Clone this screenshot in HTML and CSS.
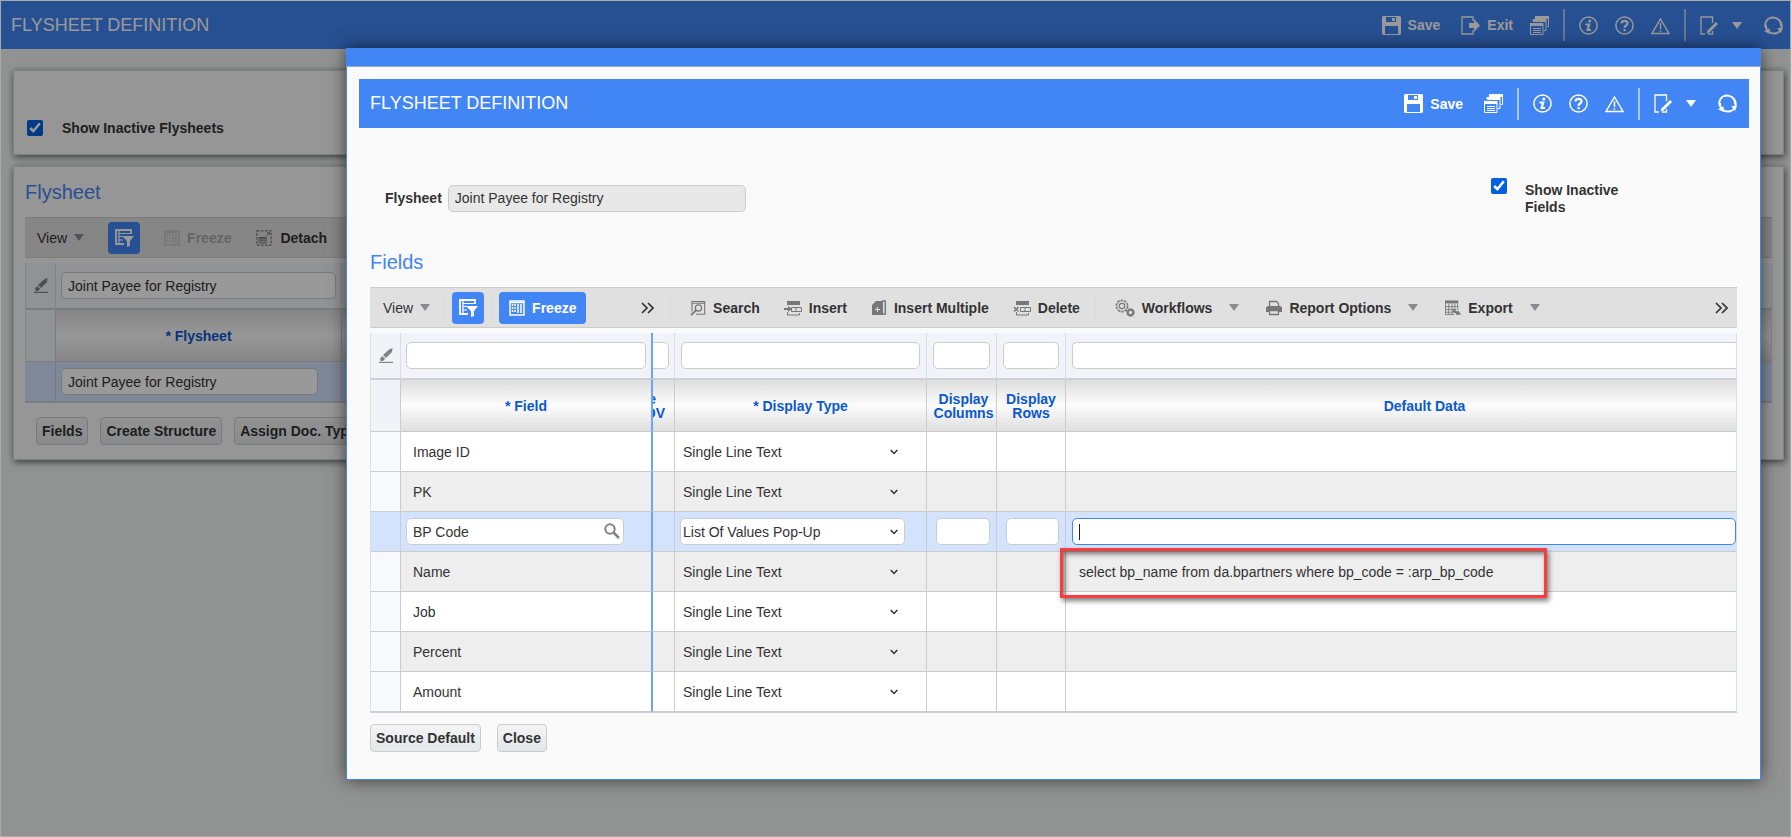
FILE: index.html
```html
<!DOCTYPE html>
<html lang="en">
<head>
  <meta charset="UTF-8" />
  <meta name="viewport" content="width=device-width, initial-scale=1.0" />
  <title>Flysheet Definition</title>
  <link rel="stylesheet" href="styles.css">
</head>
<body>
  <!-- icon set -->
  <svg class="defs" aria-hidden="true">
    <symbol id="i-save" viewBox="0 0 19 19">
      <path fill="currentColor" fill-rule="evenodd" d="M1 0h17l1 1v17l-1 1H1l-1-1V1zM4 1v5h10V1zM3 10v8h13v-8z"/>
      <path fill="currentColor" d="M10 2h3v3h-3z"/>
    </symbol>
    <symbol id="i-exit" viewBox="0 0 19 19">
      <path fill="none" stroke="currentColor" stroke-width="1.300" d="M12 5V1H1v17h11v-4"/>
      <path fill="currentColor" d="M8 7h5V3l6 6.500-6 6.500v-4H8z"/>
    </symbol>
    <symbol id="i-windows" viewBox="0 0 19 19">
      <path fill="none" stroke="currentColor" d="M5.500 2.500v-2h13v10H17M3 5V3.500h13v11h-2M.5 7.500h12.500v11H.5z"/>
      <path fill="currentColor" d="M5 0h14v3H5zM3 3h13v3H3zM0 7h13v3H0zM3 12h8v1H3zM3 14h8v1H3zM3 16h8v1H3z"/>
    </symbol>
    <symbol id="i-info" viewBox="0 0 19 19">
      <circle cx="9.500" cy="9.500" r="8.600" fill="none" stroke="currentColor" stroke-width="1.500"/>
      <circle cx="10.800" cy="4.900" r="1.500" fill="currentColor"/>
      <path fill="none" stroke="currentColor" stroke-width="2.200" d="M6.500 8.500h3.700L8.600 14h3.400"/>
    </symbol>
    <symbol id="i-help" viewBox="0 0 19 19">
      <circle cx="9.500" cy="9.500" r="8.600" fill="none" stroke="currentColor" stroke-width="1.500"/>
      <path fill="none" stroke="currentColor" stroke-width="2.200" d="M6.500 7.500c0-3.600 6-3.600 6 0 0 2-3 2-3 4.200"/>
      <path fill="currentColor" d="M8.500 13h2.200v2.200H8.500z"/>
    </symbol>
    <symbol id="i-warn" viewBox="0 0 19 19">
      <path fill="none" stroke="currentColor" stroke-width="1.400" d="M9.500 3L18 17.500H1z"/>
      <path fill="none" stroke="currentColor" stroke-width="1.500" d="M9.500 7v6M9.500 14.200v1.600"/>
    </symbol>
    <symbol id="i-edit" viewBox="0 0 19 19">
      <path fill="none" stroke="currentColor" stroke-width="1.300" d="M12.500 7V1H1v17h4M8 18h4.500v-3"/>
      <path fill="currentColor" d="M16 6l2 2-8.500 8.500-3 1 1-3z"/>
    </symbol>
    <symbol id="i-refresh" viewBox="0 0 20 20">
      <path fill="none" stroke="currentColor" stroke-width="2" d="M4 15.500A8 8 0 0 1 12 2M16 4.500A8 8 0 0 1 8 18M7 2.300a8 8 0 0 1 10.800 8.700M13 17.700A8 8 0 0 1 2.200 9"/>
      <path fill="currentColor" d="M0 16l6-3v6zM20 12l-6 1 4 5z"/>
    </symbol>
    <symbol id="i-caret" viewBox="0 0 10 7"><path fill="currentColor" d="M0 0h10L5 7z"/></symbol>
    <symbol id="i-qbe" viewBox="0 0 20 20">
      <path fill="none" stroke="currentColor" stroke-width="1.800" d="M17 6V2H2v14h8"/>
      <path fill="none" stroke="currentColor" stroke-width="1.200" d="M4 5.500h12M4 8.500h5M4 12h5M5 3v12"/>
      <path fill="currentColor" d="M8 8h12l-4 5v5l-3 1v-6z"/>
    </symbol>
    <symbol id="i-freeze" viewBox="0 0 16 16">
      <path fill="none" stroke="currentColor" stroke-width="1.500" d="M1 1h14v14H1z"/>
      <path fill="none" stroke="currentColor" stroke-width="1.500" stroke-dasharray="2 1" d="M3.500 4v9M6 4v9"/>
      <path fill="none" stroke="currentColor" stroke-width="1.500" d="M9 4v9M12 4v9M1 2.500h14"/>
    </symbol>
    <symbol id="i-detach" viewBox="0 0 18 18">
      <path fill="none" stroke="currentColor" stroke-width="1.300" stroke-dasharray="3 1.500" d="M1 1h16v16H1z"/>
      <path fill="none" stroke="currentColor" d="M3.500 8.500h8v6h-8zM6 8v6M9 8v6M3 11.500h8M11 7l3-3"/>
      <path fill="currentColor" d="M12 2.500h3.500V6zM3 8h9v1.500H3z"/>
    </symbol>
    <symbol id="i-pencil" viewBox="0 0 14 15">
      <path fill="currentColor" d="M13.500 0l-.5 4-6 6-3-3 6-5.500zM3.200 8l3 2.800L4 13H1.500L1 10.500z"/>
      <path fill="currentColor" d="M0 13.800h14V15H0z"/>
    </symbol>
    <symbol id="i-find" viewBox="0 0 16 17">
      <path fill="none" stroke="currentColor" stroke-width="1.200" d="M1.600 12V1.600h13.500v13.500H6M1.600 3.500h13.500"/>
      <circle cx="8.500" cy="8.500" r="3.300" fill="none" stroke="currentColor" stroke-width="1.300"/>
      <path stroke="currentColor" stroke-width="2" d="M6 11l-5.500 5"/>
      <path stroke="currentColor" d="M10 2h1M12 2h2"/>
    </symbol>
    <symbol id="i-insert" viewBox="0 0 18 16">
      <path fill="currentColor" d="M3 1h13v4H3zM0 8h4V6l4 3-4 3v-2H0z"/>
      <path fill="none" stroke="currentColor" d="M7.500 7.500h10v4h-10zM3.500 12v3h12v-2M12 8v3"/>
    </symbol>
    <symbol id="i-multi" viewBox="0 0 16 16">
      <path fill="currentColor" fill-rule="evenodd" d="M5 1h7v14H1V5zM6 7v2H4v1h2v2h1v-2h2V9H7V7z"/>
      <path fill="none" stroke="currentColor" stroke-width="1.500" d="M11 1h3.300v13H12"/>
    </symbol>
    <symbol id="i-delete" viewBox="0 0 18 16">
      <path fill="currentColor" d="M3 1h13v4H3z"/>
      <path fill="none" stroke="currentColor" stroke-width="1.500" d="M1 7l4.500 4.500M5.500 7L1 11.500"/>
      <path fill="none" stroke="currentColor" d="M7.500 7.500h10v4h-10zM3.500 12v3h12v-2M12 8v3"/>
    </symbol>
    <symbol id="i-gears" viewBox="0 0 20 18">
      <circle cx="7" cy="7" r="5.800" fill="none" stroke="currentColor" stroke-width="1.300" stroke-dasharray="2.600 1"/>
      <circle cx="7" cy="7" r="5" fill="none" stroke="currentColor" stroke-width=".5"/>
      <circle cx="7" cy="7" r="2.700" fill="none" stroke="currentColor" stroke-width="1.200"/>
      <circle cx="15.500" cy="13.500" r="2.700" fill="none" stroke="currentColor" stroke-width="2"/>
      <circle cx="15.500" cy="13.500" r="3.900" fill="none" stroke="currentColor" stroke-dasharray="1.700 1.300"/>
    </symbol>
    <symbol id="i-print" viewBox="0 0 16 16">
      <path fill="none" stroke="currentColor" stroke-width="1.300" d="M3.500 6V1.500h7l2 2V6M3.500 10.500h9v4h-9z"/>
      <path fill="currentColor" d="M1.500 6h13L16 7.500V12h-3v-2H3v2H0V7.500z"/>
    </symbol>
    <symbol id="i-export" viewBox="0 0 17 16">
      <path fill="currentColor" d="M0 0h14v3H0z"/>
      <path fill="none" stroke="currentColor" stroke-width=".9" d="M.5 1v14H10M4 3v12M7.500 3v12M10.500 3v8M13.500 3v7M0 6.500h14M0 9.500h12M0 12.500h9"/>
      <path fill="currentColor" d="M9 9l4 3 1-1.500 3 4.500-5 .5 0-1.500-4-2z"/>
    </symbol>
    <symbol id="i-more" viewBox="0 0 13 12">
      <path fill="none" stroke="currentColor" stroke-width="1.700" d="M1 1l5 5-5 5M7 1l5 5-5 5"/>
    </symbol>
    <symbol id="i-chevron" viewBox="0 0 8 6">
      <path fill="none" stroke="currentColor" stroke-width="1.500" d="M.7 1L4 4.500 7.300 1"/>
    </symbol>
    <symbol id="i-lens" viewBox="0 0 16 16">
      <circle cx="6" cy="6" r="4.700" fill="none" stroke="currentColor" stroke-width="2"/>
      <path stroke="currentColor" stroke-width="2.600" d="M9.500 9.500l5.500 5.500"/>
    </symbol>
  </svg>

  <div class="page">
    <header class="titlebar">
      <h1>FLYSHEET DEFINITION</h1>
      <div class="actions">
        <button class="action save"><svg class="ic19"><use href="#i-save"/></svg>Save</button>
        <button class="action"><svg class="ic19"><use href="#i-exit"/></svg>Exit</button>
        <button class="action" aria-label="Windows"><svg class="ic19"><use href="#i-windows"/></svg></button>
        <span class="divider"></span>
        <button class="action" aria-label="Info"><svg class="ic19"><use href="#i-info"/></svg></button>
        <button class="action" aria-label="Help"><svg class="ic19"><use href="#i-help"/></svg></button>
        <button class="action" aria-label="Warnings"><svg class="ic19"><use href="#i-warn"/></svg></button>
        <span class="divider"></span>
        <button class="action edit" aria-label="Edit"><svg class="ic19"><use href="#i-edit"/></svg><svg class="caret"><use href="#i-caret"/></svg></button>
        <button class="action" aria-label="Refresh"><svg class="ic19"><use href="#i-refresh"/></svg></button>
      </div>
    </header>

    <main>
      <section class="panel search-panel">
        <label class="check"><input type="checkbox" checked>Show Inactive Flysheets</label>
      </section>

      <section class="panel list-panel">
        <h2>Flysheet</h2>
        <div class="toolbar">
          <button class="tool plain">View<svg class="caret"><use href="#i-caret"/></svg></button>
          <button class="tool blue square" aria-label="Query by example"><svg class="ic20"><use href="#i-qbe"/></svg></button>
          <button class="tool off" disabled><svg class="ic16"><use href="#i-freeze"/></svg>Freeze</button>
          <button class="tool"><svg class="ic18"><use href="#i-detach"/></svg>Detach</button>
        </div>
        <table class="grid">
          <colgroup><col class="c-gutter"><col class="c-name"><col></colgroup>
          <thead>
            <tr class="filter">
              <td><svg class="pencil"><use href="#i-pencil"/></svg></td>
              <td><input type="text" aria-label="Filter flysheet" value="Joint Payee for Registry"></td>
              <td></td>
            </tr>
            <tr class="head"><th></th><th>* Flysheet</th><th></th></tr>
          </thead>
          <tbody>
            <tr class="current"><td></td><td><input class="name-box" type="text" aria-label="Flysheet name" value="Joint Payee for Registry"></td><td></td></tr>
          </tbody>
        </table>
        <div class="buttons">
          <button class="btn">Fields</button>
          <button class="btn">Create Structure</button>
          <button class="btn">Assign Doc. Type</button>
        </div>
      </section>
    </main>

    <div class="shade"></div>

    <div class="dialog" role="dialog" aria-label="Flysheet Definition">
      <div class="dialog-top"></div>
      <div class="dialog-body">
        <header class="titlebar">
          <h1>FLYSHEET DEFINITION</h1>
          <div class="actions">
            <button class="action save"><svg class="ic19"><use href="#i-save"/></svg>Save</button>
            <button class="action" aria-label="Windows"><svg class="ic19"><use href="#i-windows"/></svg></button>
            <span class="divider"></span>
            <button class="action" aria-label="Info"><svg class="ic19"><use href="#i-info"/></svg></button>
            <button class="action" aria-label="Help"><svg class="ic19"><use href="#i-help"/></svg></button>
            <button class="action" aria-label="Warnings"><svg class="ic19"><use href="#i-warn"/></svg></button>
            <span class="divider"></span>
            <button class="action edit" aria-label="Edit"><svg class="ic19"><use href="#i-edit"/></svg><svg class="caret"><use href="#i-caret"/></svg></button>
            <button class="action" aria-label="Refresh"><svg class="ic19"><use href="#i-refresh"/></svg></button>
          </div>
        </header>

        <div class="dialog-content">
          <div class="form">
            <div class="field">
              <label for="flysheet">Flysheet</label>
              <input id="flysheet" type="text" value="Joint Payee for Registry" readonly>
            </div>
            <label class="check"><input type="checkbox" checked><span>Show Inactive Fields</span></label>
          </div>

          <h2>Fields</h2>
          <div class="toolbar">
            <div class="seg"><button class="tool plain">View<svg class="caret"><use href="#i-caret"/></svg></button></div>
            <div class="seg"><button class="tool blue square" aria-label="Query by example"><svg class="ic20"><use href="#i-qbe"/></svg></button></div>
            <div class="seg seg-freeze">
              <button class="tool blue"><svg class="ic16"><use href="#i-freeze"/></svg>Freeze</button>
              <button class="tool more" aria-label="More"><svg><use href="#i-more"/></svg></button>
            </div>
            <div class="seg seg-edit">
              <button class="tool"><svg class="ic16"><use href="#i-find"/></svg>Search</button>
              <button class="tool"><svg class="ic18"><use href="#i-insert"/></svg>Insert</button>
              <button class="tool"><svg class="ic16"><use href="#i-multi"/></svg>Insert Multiple</button>
              <button class="tool"><svg class="ic18"><use href="#i-delete"/></svg>Delete</button>
            </div>
            <div class="seg seg-menus">
              <button class="tool drop"><svg class="ic20"><use href="#i-gears"/></svg>Workflows<svg class="caret"><use href="#i-caret"/></svg></button>
              <button class="tool drop"><svg class="ic16"><use href="#i-print"/></svg>Report Options<svg class="caret"><use href="#i-caret"/></svg></button>
              <button class="tool drop"><svg class="ic16"><use href="#i-export"/></svg>Export<svg class="caret"><use href="#i-caret"/></svg></button>
            </div>
            <button class="tool more last" aria-label="More"><svg><use href="#i-more"/></svg></button>
          </div>

          <table class="grid fields">
            <colgroup>
              <col class="c-gutter"><col class="c-field"><col class="c-lov"><col class="c-type"><col class="c-cols"><col class="c-rows"><col>
            </colgroup>
            <thead>
              <tr class="filter">
                <td><svg class="pencil"><use href="#i-pencil"/></svg></td>
                <td><input type="text" aria-label="Filter field"></td>
                <td class="lov"><input type="text" aria-label="Filter LOV"></td>
                <td><input type="text" aria-label="Filter display type"></td>
                <td><input type="text" aria-label="Filter display columns"></td>
                <td><input type="text" aria-label="Filter display rows"></td>
                <td class="cut"><input type="text" aria-label="Filter default data"></td>
              </tr>
              <tr class="head">
                <th></th>
                <th>* Field</th>
                <th class="lov"><span class="upper">e</span><span>OV</span></th>
                <th>* Display Type</th>
                <th class="snug">Display Columns</th>
                <th>Display Rows</th>
                <th class="wide">Default Data</th>
              </tr>
            </thead>
            <tbody>
              <tr>
                <td></td><td>Image ID</td><td></td>
                <td><div class="pick"><select aria-label="Display type"><option>Single Line Text</option></select><svg><use href="#i-chevron"/></svg></div></td>
                <td></td><td></td><td></td>
              </tr>
              <tr>
                <td></td><td>PK</td><td></td>
                <td><div class="pick"><select aria-label="Display type"><option>Single Line Text</option></select><svg><use href="#i-chevron"/></svg></div></td>
                <td></td><td></td><td></td>
              </tr>
              <tr class="current">
                <td></td>
                <td><div class="lookup"><input type="text" aria-label="Field" value="BP Code"><svg><use href="#i-lens"/></svg></div></td>
                <td></td>
                <td><div class="pick"><select aria-label="Display type"><option>List Of Values Pop-Up</option></select><svg><use href="#i-chevron"/></svg></div></td>
                <td class="num"><input type="text" aria-label="Display columns"></td>
                <td class="num"><input type="text" aria-label="Display rows"></td>
                <td class="edge"><div class="focus-box"><input type="text" aria-label="Default data"><span class="cursor"></span></div></td>
              </tr>
              <tr>
                <td></td><td>Name</td><td></td>
                <td><div class="pick"><select aria-label="Display type"><option>Single Line Text</option></select><svg><use href="#i-chevron"/></svg></div></td>
                <td></td><td></td>
                <td class="marked">select bp_name from da.bpartners where bp_code = :arp_bp_code<span class="mark"></span></td>
              </tr>
              <tr>
                <td></td><td>Job</td><td></td>
                <td><div class="pick"><select aria-label="Display type"><option>Single Line Text</option></select><svg><use href="#i-chevron"/></svg></div></td>
                <td></td><td></td><td></td>
              </tr>
              <tr>
                <td></td><td>Percent</td><td></td>
                <td><div class="pick"><select aria-label="Display type"><option>Single Line Text</option></select><svg><use href="#i-chevron"/></svg></div></td>
                <td></td><td></td><td></td>
              </tr>
              <tr>
                <td></td><td>Amount</td><td></td>
                <td><div class="pick"><select aria-label="Display type"><option>Single Line Text</option></select><svg><use href="#i-chevron"/></svg></div></td>
                <td></td><td></td><td></td>
              </tr>
            </tbody>
          </table>

          <div class="buttons">
            <button class="btn">Source Default</button>
            <button class="btn">Close</button>
          </div>
        </div>
      </div>
    </div>
  </div>
</body>
</html>
```
FILE: styles.css
```css
* {
  box-sizing: border-box;
}
body {
  margin: 0;
  font-family: "Liberation Sans", Arial, sans-serif;
  font-size: 14px;
  color: #333;
}
button, input, select {
  font: inherit;
  color: inherit;
}
button {
  background: none;
  border: none;
  padding: 0;
}
.defs {
  display: none;
}
svg {
  flex: none;
}
.page {
  position: relative;
  min-height: 100vh;
  background: #f2f5f4;
  border: 1px solid #a9a9a9;
  overflow: hidden;
}
.shade {
  position: absolute;
  inset: 0;
  background: rgba(0, 0, 0, 0.4);
}

/* icons */
.ic16 { width: 16px; height: 16px; }
.ic18 { width: 18px; height: 16px; }
.ic19 { width: 19px; height: 19px; }
.ic20 { width: 20px; height: 20px; }
.caret { width: 10px; height: 7px; }
.pencil {
  display: block;
  width: 14px;
  height: 15px;
  margin: 0 auto;
  color: #808488;
}

/* title bars */
.titlebar {
  display: flex;
  align-items: center;
  justify-content: space-between;
  height: 48px;
  padding: 0 7px 0 10px;
  background: #4285f4;
  color: #fff;
}
h1 {
  margin: 0;
  font-size: 18px;
  font-weight: normal;
}
.actions {
  display: flex;
  align-items: center;
  gap: 17px;
}
.action {
  display: flex;
  align-items: center;
  gap: 7px;
  font-weight: bold;
  color: #fff;
}
.action.save {
  margin-right: 4px;
}
.action.edit {
  gap: 13px;
  margin-right: 5px;
}
.divider {
  width: 2px;
  height: 32px;
  margin: 0 -3px;
  background: #a8c8f8;
}

/* page behind the dialog */
main {
  padding: 21px 6px 0 12px;
}
.panel {
  background: #fafafa;
  border: 1px solid #d8d8d8;
  box-shadow: 1px 2px 7px rgba(0, 0, 0, 0.6);
  margin-bottom: 11px;
}
.search-panel {
  padding: 49px 13px 17px;
}
.list-panel {
  padding: 13px 11px 14px;
}
.check {
  display: flex;
  gap: 19px;
  font-weight: bold;
  line-height: 17px;
}
.check input {
  flex: none;
  width: 16px;
  height: 16px;
  margin: 0;
  accent-color: #0060df;
}
h2 {
  margin: 0 0 13px;
  font-size: 20px;
  font-weight: normal;
  line-height: 24px;
  color: #4285f4;
}
.toolbar {
  display: flex;
  align-items: center;
  height: 41px;
  background: #e0e0e0;
  border-top: 1px solid #ccc;
  border-bottom: 1px solid #ccc;
}
.tool {
  display: flex;
  align-items: center;
  gap: 7px;
  font-weight: bold;
}
.tool svg {
  color: #777;
}
.tool .caret {
  color: #888c90;
}
.tool.plain {
  font-weight: normal;
}
.tool.off {
  color: #a8a8a8;
}
.tool.off svg {
  color: #c4c4c4;
}
.tool.blue {
  height: 32px;
  padding: 0 10px;
  background: #4285f4;
  border-radius: 4px;
  color: #fff;
}
.tool.blue svg {
  color: #fff;
}
.tool.square {
  width: 32px;
  padding: 0 6px;
}
.tool.drop .caret {
  margin-left: 10px;
}
.tool.more svg {
  width: 13px;
  height: 12px;
  color: #333;
}
.tool.last {
  margin-left: auto;
  padding-right: 9px;
}
.list-panel .toolbar {
  gap: 24px;
  padding-left: 12px;
}

/* grids */
.grid {
  width: 100%;
  margin-top: 5px;
  table-layout: fixed;
  border-collapse: separate;
  border-spacing: 0;
  border-left: 1px solid #d6dfe6;
  border-bottom: 1px solid #ccd2d6;
}
.c-gutter { width: 30px; }
.c-name { width: 286px; }
.c-field { width: 252px; }
.c-lov { width: 22px; }
.c-type { width: 252px; }
.c-cols { width: 70px; }
.c-rows { width: 69px; }
.grid td, .grid th {
  height: 40px;
  padding: 0 5px;
  border-right: 1px solid #ccc;
  border-bottom: 1px solid #ccc;
  text-align: left;
}
.grid .filter td {
  height: 47px;
  background: #f1f3f8;
  border-right-color: #d6dfe6;
  border-bottom: 2px solid #c8d0d6;
}
.grid .filter td:nth-child(n+4) {
  padding: 0 6px;
}
.grid .head th {
  height: 52px;
  background: linear-gradient(#dedede, #fcfcfc 50%, #dedede);
  color: #0b57d0;
  text-align: center;
  line-height: 14px;
}
.grid .head th:first-child {
  background: #f1f3f8;
}
.grid tbody td {
  background: #fff;
}
.grid tbody td:nth-child(2) {
  padding-left: 12px;
}
.grid tbody td:last-child {
  padding-left: 13px;
}
.grid tbody tr:nth-child(even) td {
  background: #eee;
}
.grid tbody tr td:first-child {
  background: #f7f9fd;
}
.grid tbody tr.current td {
  background: #d3e3fd;
  padding-left: 5px;
}
.grid td:last-child, .grid th:last-child {
  border-right-color: #d6dfe6;
}
.grid input {
  display: block;
  width: 100%;
  height: 27px;
  padding: 0 6px;
  background: #fff;
  border: 1px solid #ccc;
  border-radius: 5px;
}
.grid input.name-box {
  width: 257px;
}
.fields td:nth-child(2), .fields th:nth-child(2) {
  border-right: 2px solid #6fa3f7;
}
.fields .filter td:nth-child(2) {
  border-right-color: #6fa3f7;
}
.grid .filter td.lov {
  padding-left: 0;
}
.lov input {
  border-left: none;
  border-radius: 0 5px 5px 0;
}
/* the frozen column covers the left part of this header */
.grid th.lov {
  padding: 0 9px 0 0;
  overflow: hidden;
}
.lov span {
  display: flex;
  justify-content: flex-end;
  overflow: hidden;
}
.lov .upper {
  padding-right: 9px;
}
.grid th.snug {
  padding: 0 2px 0 6px;
}
/* this column runs on past the right edge */
.fields th.wide {
  padding-left: 52px;
}
.grid .filter td.cut {
  padding-right: 0;
}
.cut input {
  border-right: none;
  border-radius: 5px 0 0 5px;
}
.pick, .lookup, .focus-box {
  position: relative;
}
.pick {
  width: 225px;
}
.pick select {
  appearance: none;
  display: block;
  width: 100%;
  height: 27px;
  padding: 0 24px 0 2px;
  background: transparent;
  border: 1px solid transparent;
  border-radius: 5px;
}
.current .pick select {
  background: #fff;
  border-color: #ccc;
}
.pick svg {
  position: absolute;
  right: 7px;
  top: 11px;
  width: 8px;
  height: 6px;
}
.lookup {
  width: 218px;
}
.lookup svg {
  position: absolute;
  right: 4px;
  top: 5px;
  width: 16px;
  height: 16px;
  color: #808488;
}
.grid tbody tr.current td.num {
  padding-left: 9px;
  padding-right: 6px;
}
.grid tbody tr.current td.edge {
  padding: 0 0 0 6px;
}
.focus-box input {
  border-color: #4285f4;
}
.cursor {
  position: absolute;
  left: 7px;
  top: 6px;
  width: 1px;
  height: 16px;
  background: #222;
}
.marked {
  position: relative;
}
.mark {
  position: absolute;
  left: -6px;
  top: -4px;
  width: 487px;
  height: 50px;
  border: 3px solid #fb3c3c;
  box-shadow: 2px 3px 5px rgba(0, 0, 0, 0.5), inset 2px 3px 5px rgba(0, 0, 0, 0.5);
}

.buttons {
  display: flex;
  gap: 12px;
  margin: 14px 0 0 11px;
}
.btn {
  height: 28px;
  padding: 0 5px;
  background: linear-gradient(#f4f4f4, #e2e7ea);
  border: 1px solid #ccc;
  border-radius: 4px;
  font-weight: bold;
  white-space: nowrap;
}

/* dialog */
.dialog {
  position: absolute;
  top: 47px;
  left: 345px;
  right: 29px;
  background: #fafafa;
  border: 1px solid #4285f4;
  border-top: none;
  box-shadow: 0 0 16px rgba(0, 0, 0, 0.6);
}
.dialog-top {
  height: 19px;
  margin: 0 -1px;
  background: #4285f4;
  border-bottom: 1px solid #a0a8b4;
}
.dialog-body {
  padding: 12px 11px 27px 12px;
}
.dialog .titlebar {
  height: 49px;
  padding: 0 12px 0 11px;
}
.dialog-content {
  padding: 50px 12px 0 11px;
}
.form {
  display: flex;
  justify-content: space-between;
  height: 38px;
  margin-bottom: 34px;
  padding: 0 116px 0 15px;
}
.field {
  display: flex;
  align-items: center;
  gap: 6px;
  height: 40px;
}
.field label {
  font-weight: bold;
}
.field input {
  width: 298px;
  height: 27px;
  padding: 0 6px;
  background: #e8e8e8;
  border: 1px solid #ccc;
  border-radius: 5px;
}
.form .check {
  gap: 18px;
}
.form .check span {
  width: 96px;
  padding-top: 4px;
}
.seg {
  display: flex;
  align-items: center;
  height: 34px;
  padding: 0 7px;
  border-right: 1px solid #d6dde2;
}
.seg:first-child {
  padding: 0 14px 0 13px;
}
.seg-freeze {
  width: 179px;
  justify-content: space-between;
  padding-right: 16px;
}
.seg-edit {
  gap: 24px;
  padding: 0 15px 0 19px;
}
.seg-menus {
  gap: 27px;
  padding: 0 0 0 19px;
  border-right: none;
}
.dialog .buttons {
  gap: 16px;
  margin: 11px 0 0;
}
```
